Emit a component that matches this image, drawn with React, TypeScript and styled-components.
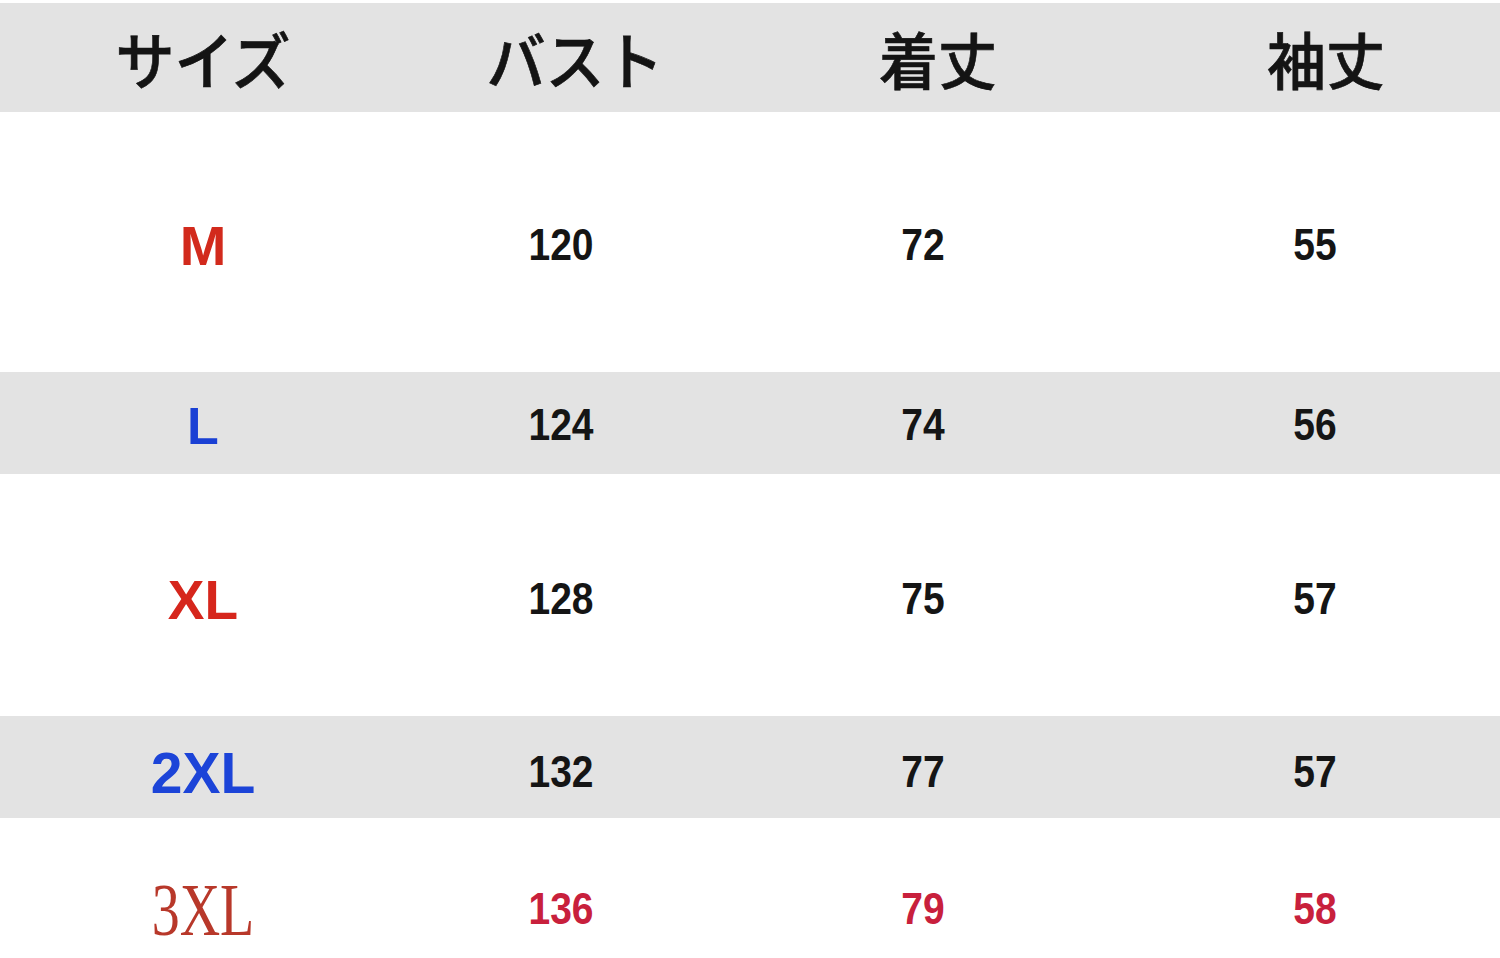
import React from "react";
import styled, { createGlobalStyle } from "styled-components";

const Global = createGlobalStyle`
  html, body { margin: 0; padding: 0; background: #ffffff; }
  body { font-family: "Liberation Sans", Arial, sans-serif; }
`;

const Table = styled.div`
  width: 1500px;
  height: 958px;
  overflow: hidden;
  padding-top: 3px;
  box-sizing: border-box;
  background: #ffffff;
`;

const Row = styled.div<{ $h: number; $gray?: boolean; $shift?: number }>`
  display: grid;
  grid-template-columns: 406px 310px 414px 370px;
  height: ${(p) => p.$h}px;
  background: ${(p) => (p.$gray ? "#e3e3e3" : "#ffffff")};
  align-items: center;
  box-sizing: border-box;
  padding-top: ${(p) => (p.$shift ?? 0) * 2}px;
`;

const HeadCell = styled.div<{ $offset?: number }>`
  display: flex;
  justify-content: center;
  padding-left: ${(p) => (p.$offset ?? 0) * 2}px;
  font-family: "Noto Sans CJK JP", "Noto Sans", sans-serif;
  font-weight: 500;
  font-size: 59px;
  color: #141414;
  line-height: 1;
`;

const HeadText = styled.span`
  display: inline-block;
  transform: scaleY(1.06);
  -webkit-text-stroke: 0.6px #141414;
`;

const Cell = styled.div`
  display: flex;
  justify-content: center;
  line-height: 1;
`;

const SizeLabel = styled.span<{ $color: string; $size: number; $serif?: boolean; $sy?: number }>`
  display: inline-block;
  font-family: ${(p) =>
    p.$serif ? `"Liberation Serif", "Times New Roman", serif` : `"Liberation Sans", Arial, sans-serif`};
  font-weight: ${(p) => (p.$serif ? 400 : 700)};
  font-size: ${(p) => p.$size}px;
  color: ${(p) => p.$color};
  transform: scaleY(${(p) => p.$sy ?? 1});
`;

const Num = styled.span<{ $color?: string }>`
  display: inline-block;
  font-family: "Liberation Sans", Arial, sans-serif;
  font-weight: 700;
  font-size: 39px;
  color: ${(p) => p.$color ?? "#151515"};
  transform: translateY(-2px) scaleY(1.12);
`;

type RowData = {
  size: string;
  color: string;
  labelSize: number;
  serif?: boolean;
  sy?: number;
  h: number;
  gray?: boolean;
  shift: number;
  values: string[];
  numColor?: string;
};

const rows: RowData[] = [
  { size: "M", color: "#d22a1c", labelSize: 56, h: 260, shift: 4, values: ["120", "72", "55"] },
  { size: "L", color: "#1a40d4", labelSize: 52, h: 102, gray: true, shift: 3, values: ["124", "74", "56"] },
  { size: "XL", color: "#d6261c", labelSize: 55, h: 242, shift: 5, values: ["128", "75", "57"] },
  { size: "2XL", color: "#1c44d8", labelSize: 57, h: 102, gray: true, shift: 6, values: ["132", "77", "57"] },
  {
    size: "3XL",
    color: "#b8382a",
    labelSize: 56,
    serif: true,
    sy: 1.32,
    h: 140,
    shift: 22,
    values: ["136", "79", "58"],
    numColor: "#c8203c",
  },
];

export default function App() {
  return (
    <>
      <Global />
      <Table>
        <Row $h={109} $gray>
          <HeadCell>
            <HeadText>サイズ</HeadText>
          </HeadCell>
          <HeadCell $offset={14}>
            <HeadText>バスト</HeadText>
          </HeadCell>
          <HeadCell $offset={15}>
            <HeadText>着丈</HeadText>
          </HeadCell>
          <HeadCell $offset={11}>
            <HeadText>袖丈</HeadText>
          </HeadCell>
        </Row>
        {rows.map((r) => (
          <Row key={r.size} $h={r.h} $gray={r.gray} $shift={r.shift}>
            <Cell>
              <SizeLabel $color={r.color} $size={r.labelSize} $serif={r.serif} $sy={r.sy}>
                {r.size}
              </SizeLabel>
            </Cell>
            {r.values.map((v, i) => (
              <Cell key={i}>
                <Num $color={r.numColor}>{v}</Num>
              </Cell>
            ))}
          </Row>
        ))}
      </Table>
    </>
  );
}
